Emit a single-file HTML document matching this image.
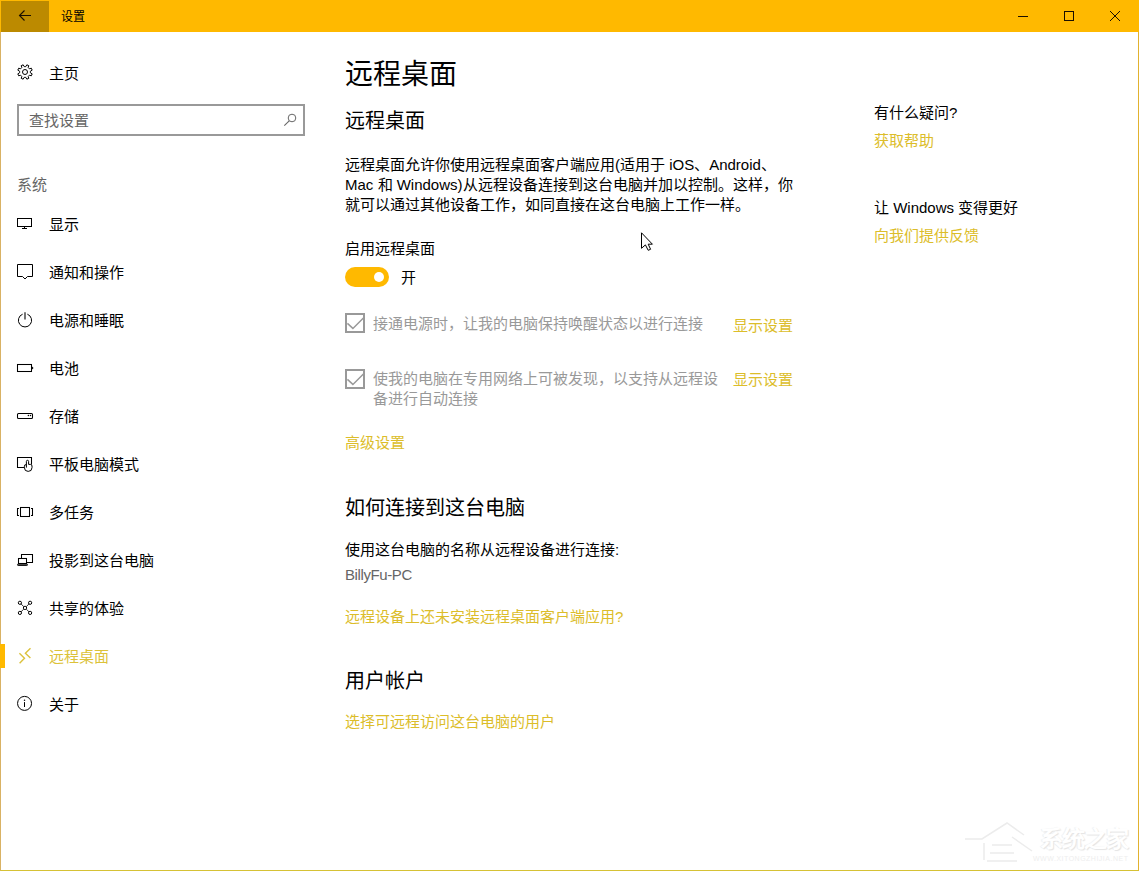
<!DOCTYPE html>
<html lang="zh-CN">
<head>
<meta charset="utf-8">
<style>
*{margin:0;padding:0;box-sizing:border-box}
html,body{width:1139px;height:871px;overflow:hidden;background:#fff}
body{font-family:"Liberation Sans",sans-serif;color:#000;position:relative}
.t{position:absolute;white-space:nowrap;line-height:1}
#frame{position:absolute;left:0;width:1139px;top:32px;height:839px;border-left:1px solid #d9b264;border-right:1px solid #e2b22e;border-bottom:1px solid #d6c235}
#title{position:absolute;left:0;top:0;width:1139px;height:32px;background:#ffb900}
#back{position:absolute;left:1px;top:1px;width:48px;height:31px;background:#bc8a00}
.gray{color:#666}
.dis{color:#999}
.link{color:#dcbd2a}
.sel{color:#dcc238}
.ic{position:absolute}
</style>
</head>
<body>
<div id="title"></div>
<div id="back"></div>
<div id="frame"></div>

<!-- title bar text -->
<div class="t" style="left:61px;top:11px;font-size:12px">设置</div>

<!-- sidebar -->
<div class="t" style="left:49px;top:66px;font-size:15px">主页</div>
<div style="position:absolute;left:17px;top:104px;width:288px;height:32px;border:2px solid #999"></div>
<div class="t gray" style="left:29px;top:113px;font-size:15px">查找设置</div>
<div class="t gray" style="left:17px;top:177px;font-size:15px">系统</div>

<div class="t" style="left:49px;top:217px;font-size:15px">显示</div>
<div class="t" style="left:49px;top:265px;font-size:15px">通知和操作</div>
<div class="t" style="left:49px;top:313px;font-size:15px">电源和睡眠</div>
<div class="t" style="left:49px;top:361px;font-size:15px">电池</div>
<div class="t" style="left:49px;top:409px;font-size:15px">存储</div>
<div class="t" style="left:49px;top:457px;font-size:15px">平板电脑模式</div>
<div class="t" style="left:49px;top:505px;font-size:15px">多任务</div>
<div class="t" style="left:49px;top:553px;font-size:15px">投影到这台电脑</div>
<div class="t" style="left:49px;top:601px;font-size:15px">共享的体验</div>
<div class="t sel" style="left:49px;top:649px;font-size:15px">远程桌面</div>
<div class="t" style="left:49px;top:697px;font-size:15px">关于</div>
<div style="position:absolute;left:0;top:644px;width:5px;height:24px;background:#ffb900"></div>

<!-- main -->
<div class="t" style="left:345px;top:61px;font-size:28px">远程桌面</div>
<div class="t" style="left:345px;top:111px;font-size:20px;font-weight:300">远程桌面</div>
<div class="t" style="left:345px;top:155px;font-size:15px;line-height:20px">远程桌面允许你使用远程桌面客户端应用(适用于 iOS、Android、<br>Mac 和 Windows)从远程设备连接到这台电脑并加以控制。这样，你<br>就可以通过其他设备工作，如同直接在这台电脑上工作一样。</div>
<div class="t" style="left:345px;top:241px;font-size:15px">启用远程桌面</div>
<div style="position:absolute;left:345px;top:267px;width:44px;height:20px;border-radius:10px;background:#ffb900"></div>
<div style="position:absolute;left:374px;top:272px;width:10px;height:10px;border-radius:5px;background:#fff"></div>
<div class="t" style="left:401px;top:270px;font-size:15px">开</div>

<div style="position:absolute;left:345px;top:313px;width:20px;height:20px;border:2px solid #999"></div>
<div class="t dis" style="left:373px;top:316px;font-size:15px">接通电源时，让我的电脑保持唤醒状态以进行连接</div>
<div class="t link" style="left:733px;top:318px;font-size:15px">显示设置</div>

<div style="position:absolute;left:345px;top:369px;width:20px;height:20px;border:2px solid #999"></div>
<div class="t dis" style="left:373px;top:369px;font-size:15px;line-height:20px">使我的电脑在专用网络上可被发现，以支持从远程设<br>备进行自动连接</div>
<div class="t link" style="left:733px;top:372px;font-size:15px">显示设置</div>

<div class="t link" style="left:345px;top:435px;font-size:15px">高级设置</div>

<div class="t" style="left:345px;top:498px;font-size:20px;font-weight:300">如何连接到这台电脑</div>
<div class="t" style="left:345px;top:542px;font-size:15px">使用这台电脑的名称从远程设备进行连接:</div>
<div class="t gray" style="left:345px;top:567px;font-size:15px;letter-spacing:-0.4px">BillyFu-PC</div>
<div class="t link" style="left:345px;top:609px;font-size:15px">远程设备上还未安装远程桌面客户端应用?</div>

<div class="t" style="left:345px;top:671px;font-size:20px;font-weight:300">用户帐户</div>
<div class="t link" style="left:345px;top:714px;font-size:15px">选择可远程访问这台电脑的用户</div>


<!-- watermark -->
<div class="t" style="left:1040px;top:828px;font-size:23px;font-weight:700;color:#fff;text-shadow:1px 1px 1px #e4e4e4,-1px 0 1px #efefef;letter-spacing:-1px">系统之家</div>
<div class="t" style="left:1033px;top:855px;font-size:7px;color:#eee;letter-spacing:0.5px">WWW.XITONGZHIJIA.NET</div>
<svg width="80" height="50" style="position:absolute;left:962px;top:815px" fill="none" stroke="#ececec" stroke-width="1.5">
 <path d="M3,24 H20 L45,8 L62,20 M22,28 V45 M30,30 H50 M28,38 H52 M25,46 H55 M50,22 L70,36"/>
</svg>
<!-- right column -->
<div class="t" style="left:874px;top:105px;font-size:15px">有什么疑问?</div>
<div class="t link" style="left:874px;top:133px;font-size:15px">获取帮助</div>
<div class="t" style="left:874px;top:200px;font-size:15px">让 Windows 变得更好</div>
<div class="t link" style="left:874px;top:228px;font-size:15px">向我们提供反馈</div>


<svg id="icons" width="1139" height="871" viewBox="0 0 1139 871" style="position:absolute;left:0;top:0" fill="none" stroke-linecap="butt" stroke-linejoin="miter">
 <!-- back arrow -->
 <path d="M24.5,10.5 L19.5,15.5 L24.5,20.5 M19.6,15.5 H31" stroke="#1a0f00" stroke-width="1.1"/>
 <!-- caption buttons -->
 <path d="M1018,16.5 H1028" stroke="#1a0f00" stroke-width="1"/>
 <rect x="1064.5" y="11.5" width="9" height="9" stroke="#1a0f00" stroke-width="1"/>
 <path d="M1110,11 L1120,21 M1120,11 L1110,21" stroke="#1a0f00" stroke-width="1"/>
 <!-- gear -->
 <polygon points="25.76,66.65 26.84,64.83 28.77,65.63 28.24,67.68 29.32,68.76 31.37,68.23 32.17,70.16 30.35,71.24 30.35,72.76 32.17,73.84 31.37,75.77 29.32,75.24 28.24,76.32 28.77,78.37 26.84,79.17 25.76,77.35 24.24,77.35 23.16,79.17 21.23,78.37 21.76,76.32 20.68,75.24 18.63,75.77 17.83,73.84 19.65,72.76 19.65,71.24 17.83,70.16 18.63,68.23 20.68,68.76 21.76,67.68 21.23,65.63 23.16,64.83 24.24,66.65" stroke="#000" stroke-width="1" stroke-linejoin="round"/>
 <circle cx="25" cy="72" r="2.5" stroke="#000" stroke-width="1"/>
 <!-- search -->
 <circle cx="292" cy="118" r="3.8" stroke="#666" stroke-width="1"/>
 <path d="M289.2,120.8 L284.3,125.7" stroke="#666" stroke-width="1.1"/>
 <!-- display -->
 <rect x="17.5" y="218.5" width="14" height="8" stroke="#000" stroke-width="1"/>
 <path d="M24.5,226.5 V228.5 M22,228.5 H27" stroke="#000" stroke-width="1"/>
 <!-- notifications -->
 <path d="M17.5,264.5 H32.5 V276.5 H27.5 L25,279 L22.5,276.5 H17.5 Z" stroke="#000" stroke-width="1"/>
 <!-- power -->
 <path d="M22.6,314.2 A6.6,6.6 0 1 0 27.4,314.2" stroke="#000" stroke-width="1"/>
 <path d="M25,312.2 V319.6" stroke="#000" stroke-width="1.1"/>
 <!-- battery -->
 <rect x="17.5" y="364.5" width="14" height="7" stroke="#000" stroke-width="1.05"/>
 <path d="M32,367 A1,1 0 0 1 32,369 Z" fill="#000" stroke="#000" stroke-width="0.6"/>
 <!-- storage -->
 <rect x="17.5" y="413.5" width="15" height="5" rx="1" stroke="#000" stroke-width="1.05"/>
 <circle cx="28.4" cy="415.6" r="0.75" fill="#000"/>
 <circle cx="30.5" cy="415.6" r="0.75" fill="#000"/>
 <!-- tablet -->
 <path d="M24.5,467.5 H17.5 V457.5 H31.5 V464.5" stroke="#000" stroke-width="1.05"/>
 <path d="M26.4,467.6 V461.4 A1.1,1.1 0 0 1 28.6,461.4 V464.4 H30.4 A1.6,1.6 0 0 1 32,466 V467.6 A3.8,3.8 0 0 1 24.4,467.6 V466.2 A1.5,1.5 0 0 1 26.4,464.8" stroke="#000" stroke-width="1"/>
 <!-- multitask -->
 <rect x="20.5" y="507.5" width="9" height="9" stroke="#000" stroke-width="1.05"/>
 <path d="M19,508.5 H17.5 V515.5 H19 M31,508.5 H32.5 V515.5 H31" stroke="#000" stroke-width="1.05"/>
 <!-- project -->
 <path d="M21.5,558 V554.5 H32.5 V562.5 H27" stroke="#000" stroke-width="1.05"/>
 <rect x="18.5" y="558.5" width="8" height="5" stroke="#000" stroke-width="1.05"/>
 <path d="M17.5,564.3 H27.5 V564.9 A0.6,0.6 0 0 1 26.9,565.5 H18.1 A0.6,0.6 0 0 1 17.5,564.9 Z" stroke="#000" stroke-width="0.9"/>
 <!-- shared -->
 <circle cx="19.9" cy="602.8" r="1.6" stroke="#000" stroke-width="1"/>
 <circle cx="30.1" cy="602.8" r="1.6" stroke="#000" stroke-width="1"/>
 <circle cx="19.9" cy="612.9" r="1.6" stroke="#000" stroke-width="1"/>
 <circle cx="30.1" cy="612.9" r="1.6" stroke="#000" stroke-width="1"/>
 <rect x="23.5" y="606.4" width="3" height="3" rx="0.6" stroke="#000" stroke-width="1"/>
 <path d="M21,603.9 L23.5,606.4 M29,603.9 L26.5,606.4 M21,611.8 L23.5,609.4 M29,611.8 L26.5,609.4" stroke="#000" stroke-width="0.8"/>
 <!-- remote desktop -->
 <path d="M19.4,653.3 L24.5,658.3 L19.6,663.2 M30.5,648.3 L25.4,653.3 L30.4,658" stroke="#dcc23c" stroke-width="1.4"/>
 <!-- about -->
 <circle cx="24.55" cy="703.4" r="7" stroke="#000" stroke-width="1"/>
 <circle cx="24.5" cy="700.3" r="0.75" fill="#000"/>
 <path d="M24.5,702.1 V707" stroke="#000" stroke-width="1"/>
 <!-- checkboxes ticks -->
 <path d="M347.4,323.4 L352.9,328.4 L363.4,317.9" stroke="#999" stroke-width="1.45"/>
 <path d="M347.4,379.4 L352.9,384.4 L363.4,373.9" stroke="#999" stroke-width="1.45"/>
 <!-- cursor -->
 <polygon points="641.5,232.8 641.5,248.3 645.4,244.9 648.2,250.3 650.6,249.3 648.2,244.2 652.4,244.2" fill="#fff" stroke="#000" stroke-width="1" stroke-linejoin="round"/>
</svg>
</body>
</html>
